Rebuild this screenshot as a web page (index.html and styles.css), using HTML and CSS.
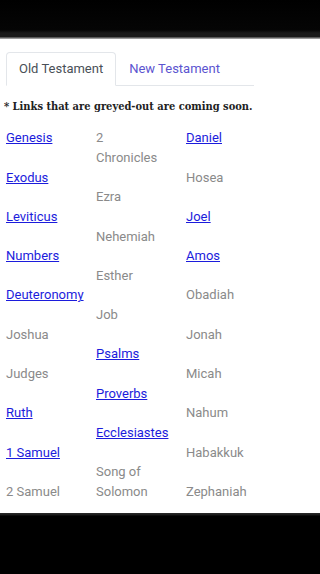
FILE: index.html
```html
<!DOCTYPE html>
<html lang="en">
<head>
<meta charset="utf-8">
<title>Old Testament</title>
<link rel="stylesheet" href="styles.css">
</head>
<body>
<div class="topbar"></div>
<main class="page">
  <nav class="tabs">
    <a class="tab active">Old Testament</a>
    <a class="tab" href="#nt">New Testament</a>
  </nav>
  <p class="note">* Links that are greyed-out are coming soon.</p>
  <div class="books">
    <div class="col">
      <a class="book" href="#genesis">Genesis</a>
      <a class="book" href="#exodus">Exodus</a>
      <a class="book" href="#leviticus">Leviticus</a>
      <a class="book" href="#numbers">Numbers</a>
      <a class="book" href="#deuteronomy">Deuteronomy</a>
      <span class="book soon">Joshua</span>
      <span class="book soon">Judges</span>
      <a class="book" href="#ruth">Ruth</a>
      <a class="book" href="#1samuel">1 Samuel</a>
      <span class="book soon">2 Samuel</span>
    </div>
    <div class="col">
      <span class="book soon">2 Chronicles</span>
      <span class="book soon">Ezra</span>
      <span class="book soon">Nehemiah</span>
      <span class="book soon">Esther</span>
      <span class="book soon">Job</span>
      <a class="book" href="#psalms">Psalms</a>
      <a class="book" href="#proverbs">Proverbs</a>
      <a class="book" href="#ecclesiastes">Ecclesiastes</a>
      <span class="book soon">Song of Solomon</span>
    </div>
    <div class="col">
      <a class="book" href="#daniel">Daniel</a>
      <span class="book soon">Hosea</span>
      <a class="book" href="#joel">Joel</a>
      <a class="book" href="#amos">Amos</a>
      <span class="book soon">Obadiah</span>
      <span class="book soon">Jonah</span>
      <span class="book soon">Micah</span>
      <span class="book soon">Nahum</span>
      <span class="book soon">Habakkuk</span>
      <span class="book soon">Zephaniah</span>
    </div>
  </div>
</main>
<div class="bottombar"></div>
</body>
</html>
```

FILE: styles.css
```css
html, body {
  margin: 0;
  padding: 0;
  background: #000;
}
body {
  height: 574px;
  display: flex;
  flex-direction: column;
  overflow: hidden;
  font-family: Roboto, "Liberation Sans", sans-serif;
  font-size: 13px;
}
.topbar {
  height: 39px;
  flex: none;
  background: linear-gradient(#000 0, #050505 30px, #1a1a1a 33px, #1a1a1a 37px, #9a9a9a 38px, #9a9a9a 39px);
}
.page {
  flex: 1;
  background: #fff;
  overflow: hidden;
  padding-top: 13px;
}
.tabs {
  display: flex;
  margin-left: 6px;
  width: 248px;
  border-bottom: 1px solid #e3e6ea;
}
.tab {
  display: block;
  padding: 6px 12px;
  line-height: 19.5px;
  margin-bottom: -1px;
  border: 1px solid transparent;
  border-top-left-radius: 4px;
  border-top-right-radius: 4px;
  color: #5b54d0;
  text-decoration: none;
}
.tab.active {
  color: #495057;
  background: #fff;
  border-color: #e3e6ea #e3e6ea #fff;
}
.note {
  margin: 11px 0 0 4px;
  font-family: "DejaVu Serif Condensed", "DejaVu Serif", "Liberation Serif", serif;
  font-stretch: condensed;
  font-weight: bold;
  font-size: 11px;
  line-height: 19.67px;
  color: #222;
  white-space: nowrap;
}
.books {
  display: flex;
  gap: 20px;
  margin: 12px 0 0 6px;
}
.col {
  width: 70px;
  flex: none;
  display: flex;
  flex-direction: column;
  align-items: flex-start;
}
.book {
  display: block;
  line-height: 19.67px;
  margin-bottom: 19.67px;
  color: #1c1cdc;
  text-decoration: underline;
}
.book.soon {
  color: #8a8a8a;
  text-decoration: none;
}
.bottombar {
  height: 61px;
  flex: none;
  background: linear-gradient(#2a2a2a 0, #1a1a1a 2px, #000 3px);
}
```
